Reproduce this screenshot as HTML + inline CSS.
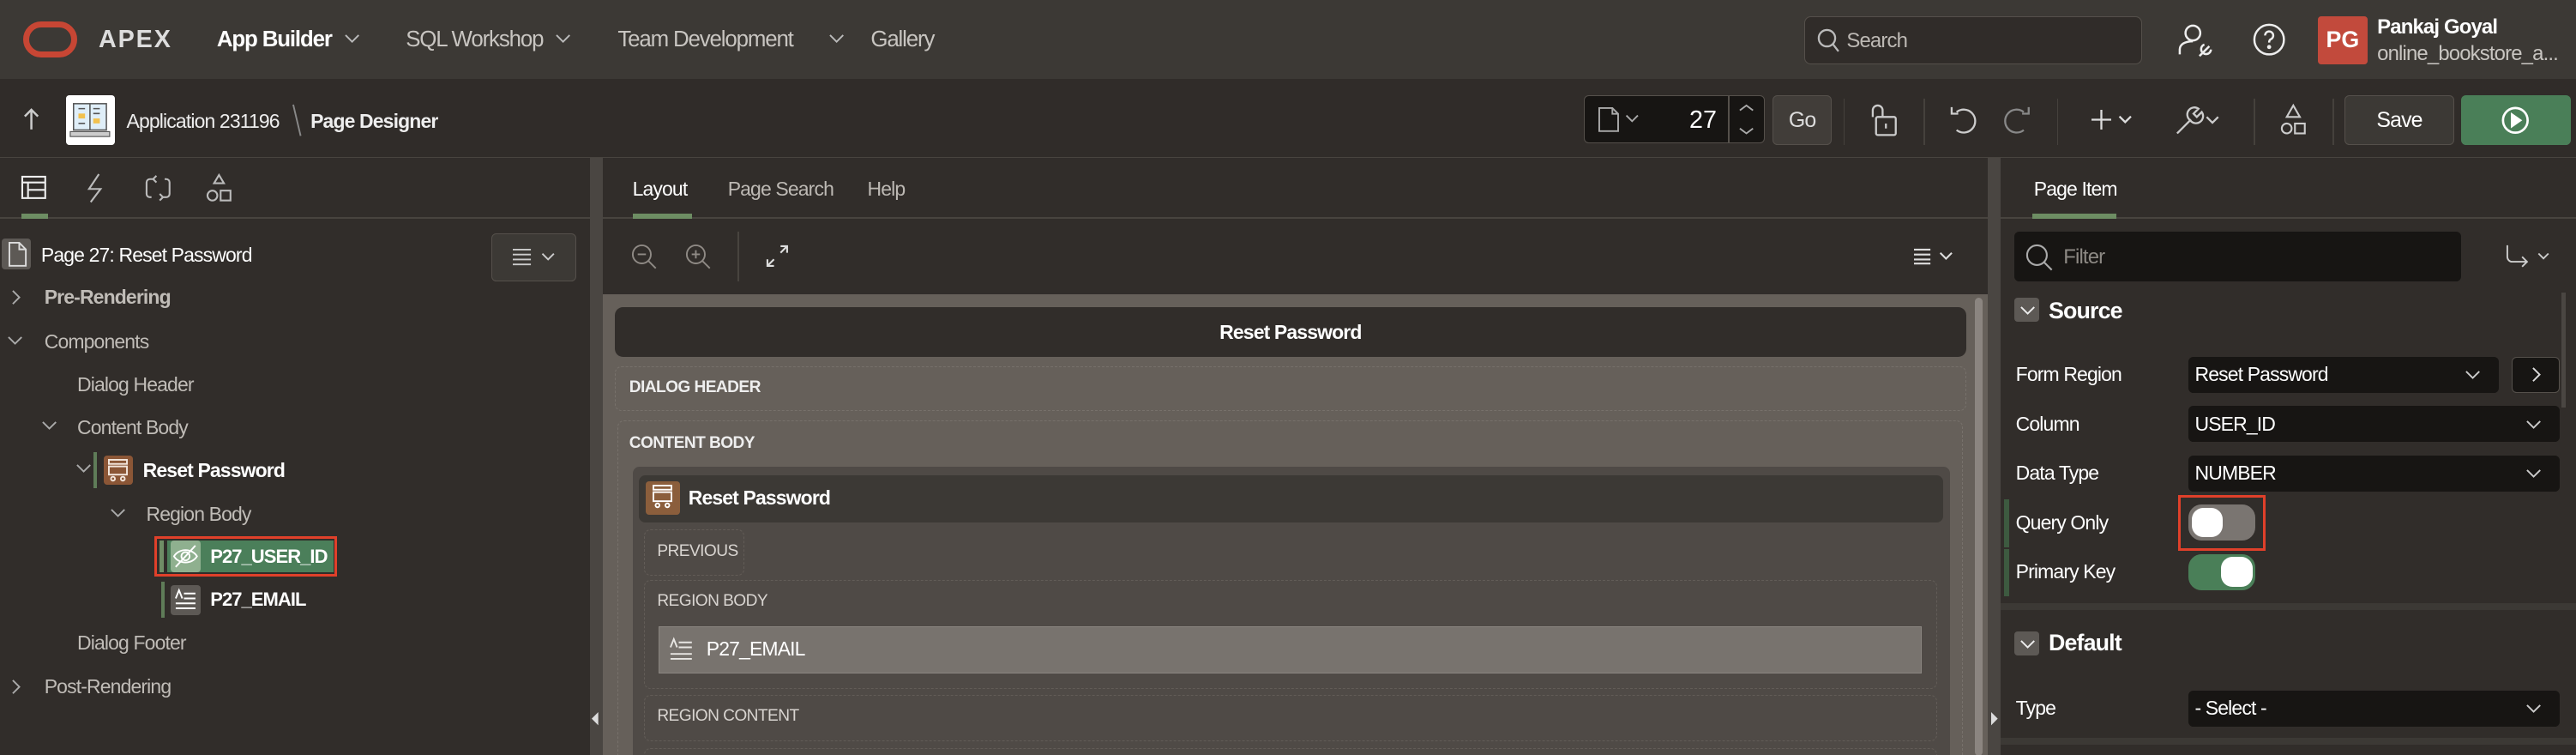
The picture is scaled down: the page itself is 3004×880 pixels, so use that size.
<!DOCTYPE html>
<html><head><meta charset="utf-8">
<style>
*{margin:0;padding:0;box-sizing:border-box}
html,body{width:3004px;height:880px;overflow:hidden;background:#312d2a}
#w{position:relative;width:1568px;height:459.4px;zoom:1.9158;overflow:hidden;background:#312d2a;font-family:"Liberation Sans",sans-serif;color:#e8e6e3}
.a{position:absolute}
.t{position:absolute;line-height:16px;white-space:nowrap;font-size:12px;letter-spacing:-0.45px}
svg{position:absolute;overflow:visible}
.sel{position:absolute;background:#171513;border-radius:3px}
.box{position:absolute;border:1px dashed #77716b;border-radius:4px}
</style></head><body><div id="w">

<!-- top header -->
<div class="a" style="left:0;top:0;width:1568px;height:48px;background:#3c3935"></div>
<div class="a" style="left:14px;top:13px;width:33px;height:22px;border:4px solid #c74634;border-radius:11px"></div>
<div class="t" style="left:60px;top:16px;font-size:15px;font-weight:bold;color:#ddd;letter-spacing:1px">APEX</div>
<div class="t" style="left:132px;top:16px;font-size:13.5px;font-weight:bold;color:#fff;letter-spacing:-0.6px">App Builder</div>
<svg style="left:210px;top:21px" width="9" height="6"><path d="M0.5 0.5 4.5 4.5 8.5 0.5" fill="none" stroke="#bbb"/></svg>
<div class="t" style="left:247px;top:16px;font-size:13.5px;color:#c8c5c1;letter-spacing:-0.6px">SQL Workshop</div>
<svg style="left:338px;top:21px" width="9" height="6"><path d="M0.5 0.5 4.5 4.5 8.5 0.5" fill="none" stroke="#bbb"/></svg>
<div class="t" style="left:376px;top:16px;font-size:13.5px;color:#c8c5c1;letter-spacing:-0.6px">Team Development</div>
<svg style="left:505px;top:21px" width="9" height="6"><path d="M0.5 0.5 4.5 4.5 8.5 0.5" fill="none" stroke="#bbb"/></svg>
<div class="t" style="left:530px;top:16px;font-size:13.5px;color:#c8c5c1;letter-spacing:-0.6px">Gallery</div>
<div class="a" style="left:1098px;top:10px;width:206px;height:29px;background:#302c29;border:1px solid #55504b;border-radius:4px"></div>
<svg style="left:1106px;top:17px" width="14" height="15"><circle cx="6" cy="6" r="5" fill="none" stroke="#bbb" stroke-width="1.2"/><path d="M9.5 9.5 13 14" stroke="#bbb" stroke-width="1.2"/></svg>
<div class="t" style="left:1124px;top:17px;font-size:12.5px;color:#bdb9b4">Search</div>
<svg style="left:1326px;top:14px" width="22" height="22" fill="none" stroke="#eee" stroke-width="1.3"><circle cx="9" cy="6" r="4.5"/><path d="M1 19v-3c0-3 3-5 8-5M13 20l6-6M16 13a3 3 0 1 0 4 3"/></svg>
<svg style="left:1371px;top:14px" width="20" height="20" fill="none" stroke="#eee" stroke-width="1.3"><circle cx="10" cy="10" r="9"/><path d="M7.5 7.5a2.5 2.5 0 1 1 3.5 2.3c-.8.4-1 1-1 2"/><circle cx="10" cy="14.5" r=".6" fill="#eee"/></svg>
<div class="a" style="left:1411px;top:10px;width:30px;height:29px;background:#c24a3c;border-radius:2px"></div>
<div class="t" style="left:1411px;top:16px;width:30px;text-align:center;font-size:14px;font-weight:bold;color:#fff;letter-spacing:0">PG</div>
<div class="t" style="left:1447px;top:9px;font-size:12.5px;font-weight:bold;color:#fff">Pankaj Goyal</div>
<div class="t" style="left:1447px;top:25px;font-size:12.5px;color:#c8c5c1">online_bookstore_a...</div>

<!-- second bar -->
<div class="a" style="left:0;top:48px;width:1568px;height:48px;background:#302c29;border-bottom:1px solid #48443f"></div>
<svg style="left:14px;top:66px" width="10" height="13" fill="none" stroke="#ccc" stroke-width="1.3"><path d="M5 13V1M1 5l4-4 4 4"/></svg>
<div class="a" style="left:40px;top:58px;width:30px;height:30px;background:#fff;border-radius:2px"></div>
<svg style="left:42px;top:61px" width="26" height="25"><rect x="3" y="2" width="20" height="16" fill="#dfeef8" stroke="#555" stroke-width=".8"/><path d="M13 2v16" stroke="#555" stroke-width=".8"/><rect x="6" y="8" width="4" height="3" fill="#f2c14e"/><rect x="15" y="11" width="4" height="3" fill="#f2c14e"/><path d="M6 5h4M15 5h4M15 8h4M6 14h4" stroke="#555" stroke-width=".8"/><rect x="1" y="19" width="24" height="3" fill="#ccc" stroke="#555" stroke-width=".6"/></svg>
<div class="t" style="left:77px;top:66px;color:#eee">Application 231196</div>
<svg style="left:178px;top:63px" width="6" height="20"><path d="M0.5 0.5 5 19.5" stroke="#888"/></svg>
<div class="t" style="left:189px;top:66px;font-weight:bold;color:#eee">Page Designer</div>

<div class="a" style="left:964px;top:58px;width:110px;height:29px;background:#171513;border:1px solid #55504b;border-radius:3px"></div>
<div class="a" style="left:1052px;top:58px;width:1px;height:29px;background:#55504b"></div>
<svg style="left:973px;top:65px" width="26" height="15" fill="none" stroke="#aaa" stroke-width="1"><path d="M0.5 .5h8l3.5 3.5v10.5h-11.5z M8.5 .5v3.5h3.5"/><path d="M17 5l3.5 3.5L24 5"/></svg>
<div class="t" style="left:1010px;top:65px;width:35px;text-align:right;font-size:15px;color:#fff;letter-spacing:0">27</div>
<svg style="left:1058px;top:63px" width="10" height="20" fill="none" stroke="#aaa"><path d="M1 4l4-3 4 3M1 15l4 3 4-3"/></svg>
<div class="a" style="left:1079px;top:58px;width:36px;height:30px;background:#413d39;border:1px solid #55504b;border-radius:3px"></div>
<div class="t" style="left:1079px;top:65px;width:36px;text-align:center;font-size:13px;color:#ddd">Go</div>
<div class="a" style="left:1122px;top:60px;width:1px;height:28px;background:#45413c"></div>
<svg style="left:1139px;top:63px" width="16" height="20" fill="none" stroke="#ccc" stroke-width="1.2"><path d="M1 8V4a3 3 0 0 1 6 0v4"/><rect x="3" y="8" width="12" height="11" rx="1"/><path d="M9 12v3"/></svg>
<div class="a" style="left:1171px;top:60px;width:1px;height:28px;background:#45413c"></div>
<svg style="left:1187px;top:63px" width="16" height="20" fill="none" stroke="#ccc" stroke-width="1.2"><path d="M4 5a7 7 0 1 1 0 11"/><path d="M1 2v4h4"/></svg>
<svg style="left:1220px;top:63px" width="16" height="20" fill="none" stroke="#888" stroke-width="1.2"><path d="M12 5a7 7 0 1 0 0 11"/><path d="M15 2v4h-4"/></svg>
<div class="a" style="left:1252px;top:60px;width:1px;height:28px;background:#45413c"></div>
<svg style="left:1273px;top:67px" width="26" height="12" fill="none" stroke="#ddd" stroke-width="1.2"><path d="M6 0v12M0 6h12M17 4l3.5 3.5L24 4"/></svg>
<svg style="left:1323px;top:63px" width="28" height="20" fill="none" stroke="#ccc" stroke-width="1.2"><path d="M2 18l8-8a4 4 0 0 1 5-7l-3 3 2 2 3-3a4 4 0 0 1-7 5l-7 7z"/><path d="M20 8l3.5 3.5L27 8"/></svg>
<div class="a" style="left:1372px;top:60px;width:1px;height:28px;background:#45413c"></div>
<svg style="left:1388px;top:63px" width="16" height="20" fill="none" stroke="#ccc" stroke-width="1.1"><path d="M8 1l4 7H4z"/><circle cx="4" cy="15" r="3"/><rect x="9" y="12" width="6" height="6"/></svg>
<div class="a" style="left:1420px;top:60px;width:1px;height:28px;background:#45413c"></div>
<div class="a" style="left:1427px;top:58px;width:67px;height:30px;background:#3c3935;border:1px solid #55504b;border-radius:3px"></div>
<div class="t" style="left:1427px;top:65px;width:67px;text-align:center;font-size:13px;color:#fff">Save</div>
<div class="a" style="left:1498px;top:58px;width:67px;height:30px;background:#4a7f58;border-radius:3px"></div>
<svg style="left:1522px;top:64px" width="18" height="18" fill="none" stroke="#fff" stroke-width="1.4"><circle cx="9" cy="9" r="7.5"/><path d="M7 5.5l5 3.5-5 3.5z" fill="#fff"/></svg>

<!-- splitters -->
<div class="a" style="left:359px;top:96px;width:8px;height:364px;background:#4a4642"></div>
<div class="a" style="left:1210px;top:96px;width:8px;height:364px;background:#4a4642"></div>
<svg style="left:360px;top:433px" width="5" height="8"><path d="M4 0v8L0 4z" fill="#ddd"/></svg>
<svg style="left:1212px;top:433px" width="5" height="8"><path d="M0 0v8l4-4z" fill="#ddd"/></svg>

<!-- left panel -->
<div class="a" style="left:0;top:132px;width:359px;height:1px;background:#48443f"></div>
<svg style="left:13px;top:107px" width="16" height="15" fill="none" stroke="#eee" stroke-width="1.1"><rect x=".5" y=".5" width="14" height="13"/><path d="M.5 4h14M4 4v9.5M4 8.5h10.5"/></svg>
<div class="a" style="left:13px;top:130px;width:16px;height:3px;background:#6d8d63"></div>
<svg style="left:52px;top:106px" width="12" height="17" fill="none" stroke="#bbb" stroke-width="1.1"><path d="M8 0L2 9h7l-6 8"/></svg>
<svg style="left:88px;top:106px" width="16" height="17" fill="none" stroke="#bbb" stroke-width="1.1"><path d="M5 3H3a2 2 0 0 0-2 2v7a2 2 0 0 0 2 2h1M11 14h2a2 2 0 0 0 2-2V5a2 2 0 0 0-2-2h-1M7 1L5 3l2 2M9 12l2 2-2 2"/></svg>
<svg style="left:126px;top:106px" width="15" height="17" fill="none" stroke="#bbb" stroke-width="1.1"><path d="M7.5 .5l3 5h-6z"/><circle cx="3.5" cy="13" r="3"/><rect x="8.5" y="10" width="6" height="6"/></svg>

<div class="a" style="left:1px;top:145px;width:18px;height:19px;background:#5d5955;border-radius:2px"></div>
<svg style="left:5px;top:147px" width="11" height="15" fill="none" stroke="#ddd" stroke-width="1"><path d="M.5 .5h6l4 4v10h-10z M6.5 .5v4h4"/></svg>
<div class="t" style="left:25px;top:147px;color:#fff">Page 27: Reset Password</div>
<div class="a" style="left:299px;top:142px;width:52px;height:29px;background:#3c3935;border:1px solid #55504b;border-radius:3px"></div>
<svg style="left:312px;top:151px" width="28" height="11" fill="none" stroke="#ccc" stroke-width="1"><path d="M0 1h11M0 4h11M0 7h11M0 10h11M18 3.5l3.5 3.5L25 3.5"/></svg>

<svg style="left:7px;top:176px" width="6" height="10" fill="none" stroke="#aaa"><path d="M1 1l4 4-4 4"/></svg>
<div class="t" style="left:27px;top:173px;font-weight:bold;color:#c0bcb7">Pre-Rendering</div>
<svg style="left:4px;top:204px" width="10" height="6" fill="none" stroke="#aaa"><path d="M1 1l4 4 4-4"/></svg>
<div class="t" style="left:27px;top:200px;color:#c0bcb7">Components</div>
<div class="t" style="left:47px;top:226px;color:#c0bcb7">Dialog Header</div>
<svg style="left:25px;top:256px" width="10" height="6" fill="none" stroke="#aaa"><path d="M1 1l4 4 4-4"/></svg>
<div class="t" style="left:47px;top:252px;color:#c0bcb7">Content Body</div>
<svg style="left:46px;top:282px" width="10" height="6" fill="none" stroke="#aaa"><path d="M1 1l4 4 4-4"/></svg>
<div class="a" style="left:57px;top:275px;width:2px;height:22px;background:#5f7c58"></div>
<div class="a" style="left:63px;top:277px;width:18px;height:18px;background:#8b5636;border-radius:2px"></div>
<svg style="left:66px;top:279px" width="12" height="14" fill="none" stroke="#f3e6dc" stroke-width="1"><rect x=".5" y=".5" width="11" height="2.5"/><rect x=".5" y="4.5" width="11" height="5"/><circle cx="3" cy="12" r="1.2"/><circle cx="9" cy="12" r="1.2"/></svg>
<div class="t" style="left:87px;top:278px;font-weight:bold;color:#fff">Reset Password</div>
<svg style="left:67px;top:309px" width="10" height="6" fill="none" stroke="#aaa"><path d="M1 1l4 4 4-4"/></svg>
<div class="t" style="left:89px;top:305px;color:#c0bcb7">Region Body</div>
<div class="a" style="left:94px;top:326px;width:111px;height:25px;border:2px solid #e0402a"></div>
<div class="a" style="left:97px;top:329px;width:2.5px;height:19px;background:#6f8d66"></div>
<div class="a" style="left:102px;top:329px;width:101px;height:19px;background:#4b7f5a"></div>
<div class="a" style="left:104px;top:329px;width:18px;height:19px;background:#8fb08f;border-radius:2px"></div>
<svg style="left:105px;top:331px" width="16" height="15" fill="none" stroke="#fff" stroke-width="1"><path d="M1 7.5c3-5 11-5 14 0c-3 5-11 5-14 0z"/><circle cx="8" cy="7.5" r="2.5"/><path d="M2 14L14 1"/></svg>
<div class="t" style="left:128px;top:331px;font-size:11.5px;font-weight:bold;color:#fff;letter-spacing:-0.5px">P27_USER_ID</div>
<div class="a" style="left:98px;top:354px;width:2px;height:22px;background:#5f7c58"></div>
<div class="a" style="left:104px;top:356px;width:18px;height:18px;background:#5d5955;border-radius:2px"></div>
<svg style="left:106px;top:358px" width="14" height="14" fill="none" stroke="#fff" stroke-width="1"><path d="M1 6l2-5 2 5M6 3h7M6 6h7M1 9h12M1 12h12"/></svg>
<div class="t" style="left:128px;top:357px;font-size:11.5px;font-weight:bold;color:#fff;letter-spacing:-0.5px">P27_EMAIL</div>
<div class="t" style="left:47px;top:383px;color:#c0bcb7">Dialog Footer</div>
<svg style="left:7px;top:413px" width="6" height="10" fill="none" stroke="#aaa"><path d="M1 1l4 4-4 4"/></svg>
<div class="t" style="left:27px;top:410px;color:#c0bcb7">Post-Rendering</div>

<!-- middle panel -->
<div class="a" style="left:367px;top:132px;width:843px;height:1px;background:#48443f"></div>
<div class="t" style="left:385px;top:107px;color:#fff">Layout</div>
<div class="a" style="left:385px;top:130px;width:36px;height:3px;background:#6d8d63"></div>
<div class="t" style="left:443px;top:107px;color:#bdb9b4">Page Search</div>
<div class="t" style="left:528px;top:107px;color:#bdb9b4">Help</div>
<svg style="left:384px;top:148px" width="16" height="16" fill="none" stroke="#8f8a85" stroke-width="1"><circle cx="6.5" cy="6.5" r="5.5"/><path d="M10.5 10.5L15 15M4 6.5h5"/></svg>
<svg style="left:417px;top:148px" width="16" height="16" fill="none" stroke="#8f8a85" stroke-width="1"><circle cx="6.5" cy="6.5" r="5.5"/><path d="M10.5 10.5L15 15M4 6.5h5M6.5 4v5"/></svg>
<div class="a" style="left:449px;top:141px;width:1px;height:30px;background:#48443f"></div>
<svg style="left:466px;top:149px" width="14" height="14" fill="none" stroke="#ddd" stroke-width="1.1"><path d="M9 1h4v4M13 1L9 5M5 13H1V9M1 13l4-4"/></svg>
<svg style="left:1165px;top:151px" width="25" height="10" fill="none" stroke="#ddd" stroke-width="1.1"><path d="M0 1h10M0 4h10M0 7h10M0 9.5h10M16 3l3.5 3.5L23 3"/></svg>

<div class="a" style="left:367px;top:179px;width:843px;height:281px;background:#66605a"></div>
<div class="a" style="left:1202px;top:181px;width:5px;height:279px;background:#8b8580;border-radius:3px"></div>
<div class="a" style="left:374px;top:187px;width:823px;height:30px;background:#312d2a;border-radius:5px"></div>
<div class="t" style="left:374px;top:194px;width:823px;text-align:center;font-size:12px;font-weight:bold;color:#fff">Reset Password</div>
<div class="box" style="left:374px;top:223px;width:823px;height:27px"></div>
<div class="t" style="left:383px;top:228px;font-size:10px;font-weight:bold;color:#eee;letter-spacing:-0.3px">DIALOG HEADER</div>
<div class="box" style="left:376px;top:256px;width:819px;height:210px"></div>
<div class="t" style="left:383px;top:262px;font-size:10px;font-weight:bold;color:#eee;letter-spacing:-0.3px">CONTENT BODY</div>
<div class="a" style="left:385px;top:284px;width:802px;height:180px;background:#4f4a46;border-radius:4px"></div>
<div class="a" style="left:389px;top:289px;width:794px;height:29px;background:#3c3935;border-radius:4px"></div>
<div class="a" style="left:393px;top:293px;width:21px;height:20px;background:#8b5e3c;border-radius:2px"></div>
<svg style="left:397px;top:295px" width="12" height="15" fill="none" stroke="#fff" stroke-width="1"><rect x=".5" y=".5" width="11" height="2.5"/><rect x=".5" y="4.5" width="11" height="5.5"/><circle cx="3" cy="12.5" r="1.2"/><circle cx="9" cy="12.5" r="1.2"/></svg>
<div class="t" style="left:419px;top:295px;font-size:12px;font-weight:bold;color:#fff">Reset Password</div>
<div class="box" style="left:392px;top:322px;width:61px;height:28px;border-color:#625c57"></div>
<div class="t" style="left:400px;top:328px;font-size:10px;color:#d8d4d0;letter-spacing:-0.3px">PREVIOUS</div>
<div class="box" style="left:392px;top:353px;width:787px;height:66px;border-color:#625c57"></div>
<div class="t" style="left:400px;top:358px;font-size:10px;color:#d8d4d0;letter-spacing:-0.3px">REGION BODY</div>
<div class="a" style="left:401px;top:381px;width:769px;height:29px;background:#78736e;border:1px solid #8a8580"></div>
<svg style="left:407px;top:388px" width="16" height="15" fill="none" stroke="#e8e6e3" stroke-width="1"><path d="M1 6l2-5 2 5M6 3h8M6 6h8M1 10h13M1 13h13"/></svg>
<div class="t" style="left:430px;top:387px;font-size:12px;color:#fff">P27_EMAIL</div>
<div class="box" style="left:392px;top:423px;width:787px;height:28px;border-color:#625c57"></div>
<div class="t" style="left:400px;top:428px;font-size:10px;color:#d8d4d0;letter-spacing:-0.3px">REGION CONTENT</div>
<div class="box" style="left:392px;top:455px;width:787px;height:20px;border-color:#625c57"></div>

<!-- right panel -->
<div class="a" style="left:1218px;top:132px;width:350px;height:1px;background:#48443f"></div>
<div class="t" style="left:1238px;top:107px;color:#fff">Page Item</div>
<div class="a" style="left:1237px;top:130px;width:51px;height:3px;background:#6d8d63"></div>
<div class="sel" style="left:1226px;top:141px;width:272px;height:30px"></div>
<svg style="left:1233px;top:148px" width="16" height="17" fill="none" stroke="#aaa" stroke-width="1.1"><circle cx="7" cy="7" r="6"/><path d="M11.5 11.5L16 16"/></svg>
<div class="t" style="left:1256px;top:149px;font-size:12.5px;color:#8d8984">Filter</div>
<svg style="left:1525px;top:148px" width="27" height="16" fill="none" stroke="#ccc" stroke-width="1"><path d="M1 1v7a3 3 0 0 0 3 3h9M10 8l3 3-3 3M20 6l3 3 3-3"/></svg>
<div class="a" style="left:1559px;top:178px;width:3px;height:70px;background:#4a4642"></div>

<div class="a" style="left:1226px;top:181px;width:15px;height:15px;background:#5d5955;border-radius:2px"></div>
<svg style="left:1229px;top:186px" width="10" height="6" fill="none" stroke="#eee"><path d="M1 1l4 4 4-4"/></svg>
<div class="t" style="left:1247px;top:181px;font-size:14px;font-weight:bold;color:#fff">Source</div>

<div class="t" style="left:1227px;top:220px;color:#fff">Form Region</div>
<div class="sel" style="left:1332px;top:217px;width:189px;height:22px"></div>
<div class="t" style="left:1336px;top:220px;color:#fff">Reset Password</div>
<svg style="left:1500px;top:225px" width="10" height="6" fill="none" stroke="#ccc"><path d="M1 1l4 4 4-4"/></svg>
<div class="a" style="left:1529px;top:217px;width:29px;height:22px;background:#171513;border:1px solid #55504b;border-radius:3px"></div>
<svg style="left:1541px;top:223px" width="6" height="10" fill="none" stroke="#ddd"><path d="M1 1l4 4-4 4"/></svg>

<div class="t" style="left:1227px;top:250px;color:#fff">Column</div>
<div class="sel" style="left:1332px;top:247px;width:226px;height:22px"></div>
<div class="t" style="left:1336px;top:250px;color:#fff">USER_ID</div>
<svg style="left:1537px;top:255px" width="10" height="6" fill="none" stroke="#ccc"><path d="M1 1l4 4 4-4"/></svg>

<div class="t" style="left:1227px;top:280px;color:#fff">Data Type</div>
<div class="sel" style="left:1332px;top:277px;width:226px;height:22px"></div>
<div class="t" style="left:1336px;top:280px;color:#fff">NUMBER</div>
<svg style="left:1537px;top:285px" width="10" height="6" fill="none" stroke="#ccc"><path d="M1 1l4 4 4-4"/></svg>

<div class="a" style="left:1220px;top:304px;width:3px;height:29px;background:#3d5a40"></div>
<div class="t" style="left:1227px;top:310px;color:#fff">Query Only</div>
<div class="a" style="left:1326px;top:301px;width:53px;height:34px;border:2px solid #e0402a"></div>
<div class="a" style="left:1332px;top:307px;width:41px;height:22px;background:#7a7571;border-radius:8px"></div>
<div class="a" style="left:1334px;top:309px;width:19px;height:18px;background:#fff;border-radius:7px"></div>

<div class="a" style="left:1220px;top:334px;width:3px;height:29px;background:#3d5a40"></div>
<div class="t" style="left:1227px;top:340px;color:#fff">Primary Key</div>
<div class="a" style="left:1332px;top:337px;width:41px;height:22px;background:#4a7f58;border-radius:8px"></div>
<div class="a" style="left:1352px;top:339px;width:19px;height:18px;background:#fff;border-radius:7px"></div>

<div class="a" style="left:1218px;top:367px;width:350px;height:4px;background:#3c3935"></div>
<div class="a" style="left:1226px;top:384px;width:15px;height:15px;background:#5d5955;border-radius:2px"></div>
<svg style="left:1229px;top:389px" width="10" height="6" fill="none" stroke="#eee"><path d="M1 1l4 4 4-4"/></svg>
<div class="t" style="left:1247px;top:383px;font-size:14px;font-weight:bold;color:#fff">Default</div>
<div class="t" style="left:1227px;top:423px;color:#fff">Type</div>
<div class="sel" style="left:1332px;top:420px;width:226px;height:22px"></div>
<div class="t" style="left:1336px;top:423px;color:#fff">- Select -</div>
<svg style="left:1537px;top:428px" width="10" height="6" fill="none" stroke="#ccc"><path d="M1 1l4 4 4-4"/></svg>
<div class="a" style="left:1218px;top:449px;width:350px;height:4px;background:#3c3935"></div>

</div></body></html>
